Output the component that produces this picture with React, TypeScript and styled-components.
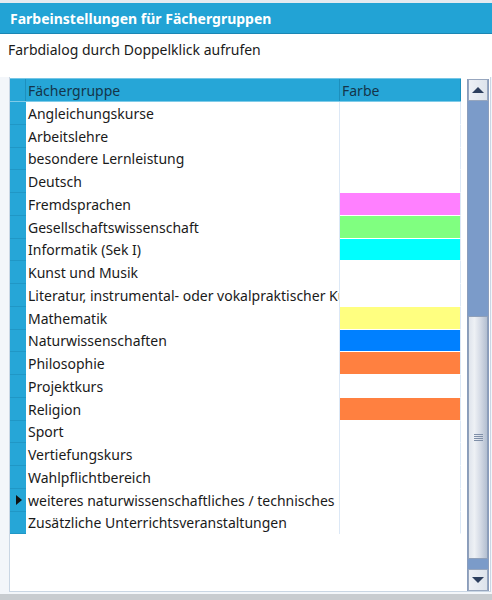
import React from "react";
import styled, { createGlobalStyle } from "styled-components";

const Global = createGlobalStyle`
  html, body { margin: 0; padding: 0; background: #ffffff; }
  body { font-family: "Noto Sans", "Open Sans", sans-serif; }
  * { box-sizing: border-box; }
`;

const Window = styled.div`
  width: 492px;
  height: 600px;
  display: flex;
  flex-direction: column;
  background: #ffffff;
  border-top: 3px solid #e4eaf0;
  border-bottom: 6px solid #c8ccd0;
  box-shadow: inset 0 -2px 0 #3aa9cf;
  overflow: hidden;
`;

const TitleBar = styled.div`
  height: 31px;
  flex: none;
  background: #22a3d5;
  border-bottom: 1px solid #1b86b3;
  color: #ffffff;
  font-weight: 700;
  font-size: 14px;
  display: flex;
  align-items: center;
  padding-left: 10px;
`;

const Hint = styled.div`
  font-size: 14px;
  color: #1a1a1a;
  padding: 6px 0 0 8px;
  height: 43px;
  flex: none;
`;

const GridArea = styled.div`
  flex: 1;
  display: flex;
  background: #f3f6fa;
  padding: 0 3px 2px 9px;
`;

const Grid = styled.div`
  flex: 1;
  display: flex;
  background: #ffffff;
  border: 1px solid #c9d6e4;
  border-top: none;
`;

const Table = styled.div`
  flex: 1;
  display: flex;
  flex-direction: column;
  padding-top: 1px;
  min-width: 0;
`;

const HeaderRow = styled.div`
  display: flex;
  height: 24px;
  width: 451px;
  background: #26a6d7;
  border-top: 1px solid #74c6e6;
  border-bottom: 1px solid #7fcbe8;
`;

const RowHeadCell = styled.div<{ $head?: boolean }>`
  width: 16px;
  flex: none;
  background: #26a6d7;
  border-right: 1px solid ${(p) => (p.$head ? "#1d8fbd" : "#2098c8")};
  display: flex;
  align-items: center;
  justify-content: center;
`;

const HeadCell = styled.div<{ $w: number }>`
  width: ${(p) => p.$w}px;
  flex: none;
  font-size: 14px;
  color: #14354a;
  padding-left: 2px;
  display: flex;
  align-items: center;
  border-right: 1px solid #1d8fbd;
  white-space: nowrap;
`;

const Row = styled.div`
  display: flex;
  height: 22.75px;
  width: 451px;
`;

const RowHead = styled.div`
  width: 16px;
  flex: none;
  background: #26a6d7;
  border-bottom: 1px solid #2097c6;
  display: flex;
  align-items: center;
  justify-content: center;
`;

const NameCell = styled.div`
  width: 314px;
  flex: none;
  font-size: 14px;
  color: #1a1a1a;
  padding-left: 2px;
  display: flex;
  align-items: center;
  white-space: nowrap;
  overflow: hidden;
  border-right: 1px solid #dce8f6;
`;

const ColorCell = styled.div<{ $c?: string }>`
  width: 121px;
  flex: none;
  border-right: 1px solid #dce8f6;
  border-bottom: 1px solid #ffffff;
  background: ${(p) => p.$c ?? "#ffffff"};
`;

const Arrow = styled.div`
  width: 0;
  height: 0;
  border-top: 5px solid transparent;
  border-bottom: 5px solid transparent;
  border-left: 6px solid #111111;
  margin-left: 1px;
`;

const ScrollBar = styled.div`
  width: 22px;
  flex: none;
  margin: 2px 1px 0 6px;
  display: flex;
  flex-direction: column;
  background: #7b9bc9;
  border-left: 1px solid #8a9dbc;
  border-right: 1px solid #8a9dbc;
`;

const ScrollBtn = styled.div`
  height: 22px;
  flex: none;
  background: linear-gradient(to right, #eef1f6, #dde3ec);
  border: 1px solid #97a6be;
  display: flex;
  align-items: center;
  justify-content: center;
`;

const Track = styled.div<{ $h: number }>`
  height: ${(p) => p.$h}px;
  flex: none;
`;

const Thumb = styled.div`
  flex: 1;
  background: linear-gradient(to right, #dfe4ec 0%, #eef1f5 30%, #d7dde7 60%, #b3bfd1 100%);
  border: 1px solid #8e9fb9;
  display: flex;
  align-items: center;
  justify-content: center;
`;

const Grip = styled.div`
  width: 9px;
  height: 8px;
  background: repeating-linear-gradient(to bottom, #7f8fa8 0 1px, transparent 1px 2px);
`;

const Tri = styled.div<{ $up?: boolean }>`
  width: 0;
  height: 0;
  border-left: 6px solid transparent;
  border-right: 6px solid transparent;
  ${(p) => (p.$up ? "border-bottom: 6px solid #2d3f5e;" : "border-top: 6px solid #2d3f5e;")}
`;

const rows: { name: string; color?: string }[] = [
  { name: "Angleichungskurse" },
  { name: "Arbeitslehre" },
  { name: "besondere Lernleistung" },
  { name: "Deutsch" },
  { name: "Fremdsprachen", color: "#ff80ff" },
  { name: "Gesellschaftswissenschaft", color: "#80ff80" },
  { name: "Informatik (Sek I)", color: "#00ffff" },
  { name: "Kunst und Musik" },
  { name: "Literatur, instrumental- oder vokalpraktischer Kurs" },
  { name: "Mathematik", color: "#ffff80" },
  { name: "Naturwissenschaften", color: "#0080ff" },
  { name: "Philosophie", color: "#ff8040" },
  { name: "Projektkurs" },
  { name: "Religion", color: "#ff8040" },
  { name: "Sport" },
  { name: "Vertiefungskurs" },
  { name: "Wahlpflichtbereich" },
  { name: "weiteres naturwissenschaftliches / technisches Fach" },
  { name: "Zusätzliche Unterrichtsveranstaltungen" },
];

export default function App() {
  return (
    <>
      <Global />
      <Window>
        <TitleBar>Farbeinstellungen für Fächergruppen</TitleBar>
        <Hint>Farbdialog durch Doppelklick aufrufen</Hint>
        <GridArea>
          <Grid>
            <Table>
              <HeaderRow>
                <RowHeadCell $head />
                <HeadCell $w={314}>Fächergruppe</HeadCell>
                <HeadCell $w={121}>Farbe</HeadCell>
              </HeaderRow>
              {rows.map((r, i) => (
                <Row key={r.name}>
                  <RowHead>{i === 17 && <Arrow />}</RowHead>
                  <NameCell>{r.name}</NameCell>
                  <ColorCell $c={r.color} />
                </Row>
              ))}
            </Table>
            <ScrollBar>
              <ScrollBtn>
                <Tri $up />
              </ScrollBtn>
              <Track $h={215} />
              <Thumb>
                <Grip />
              </Thumb>
              <Track $h={10} />
              <ScrollBtn>
                <Tri />
              </ScrollBtn>
            </ScrollBar>
          </Grid>
        </GridArea>
      </Window>
    </>
  );
}
